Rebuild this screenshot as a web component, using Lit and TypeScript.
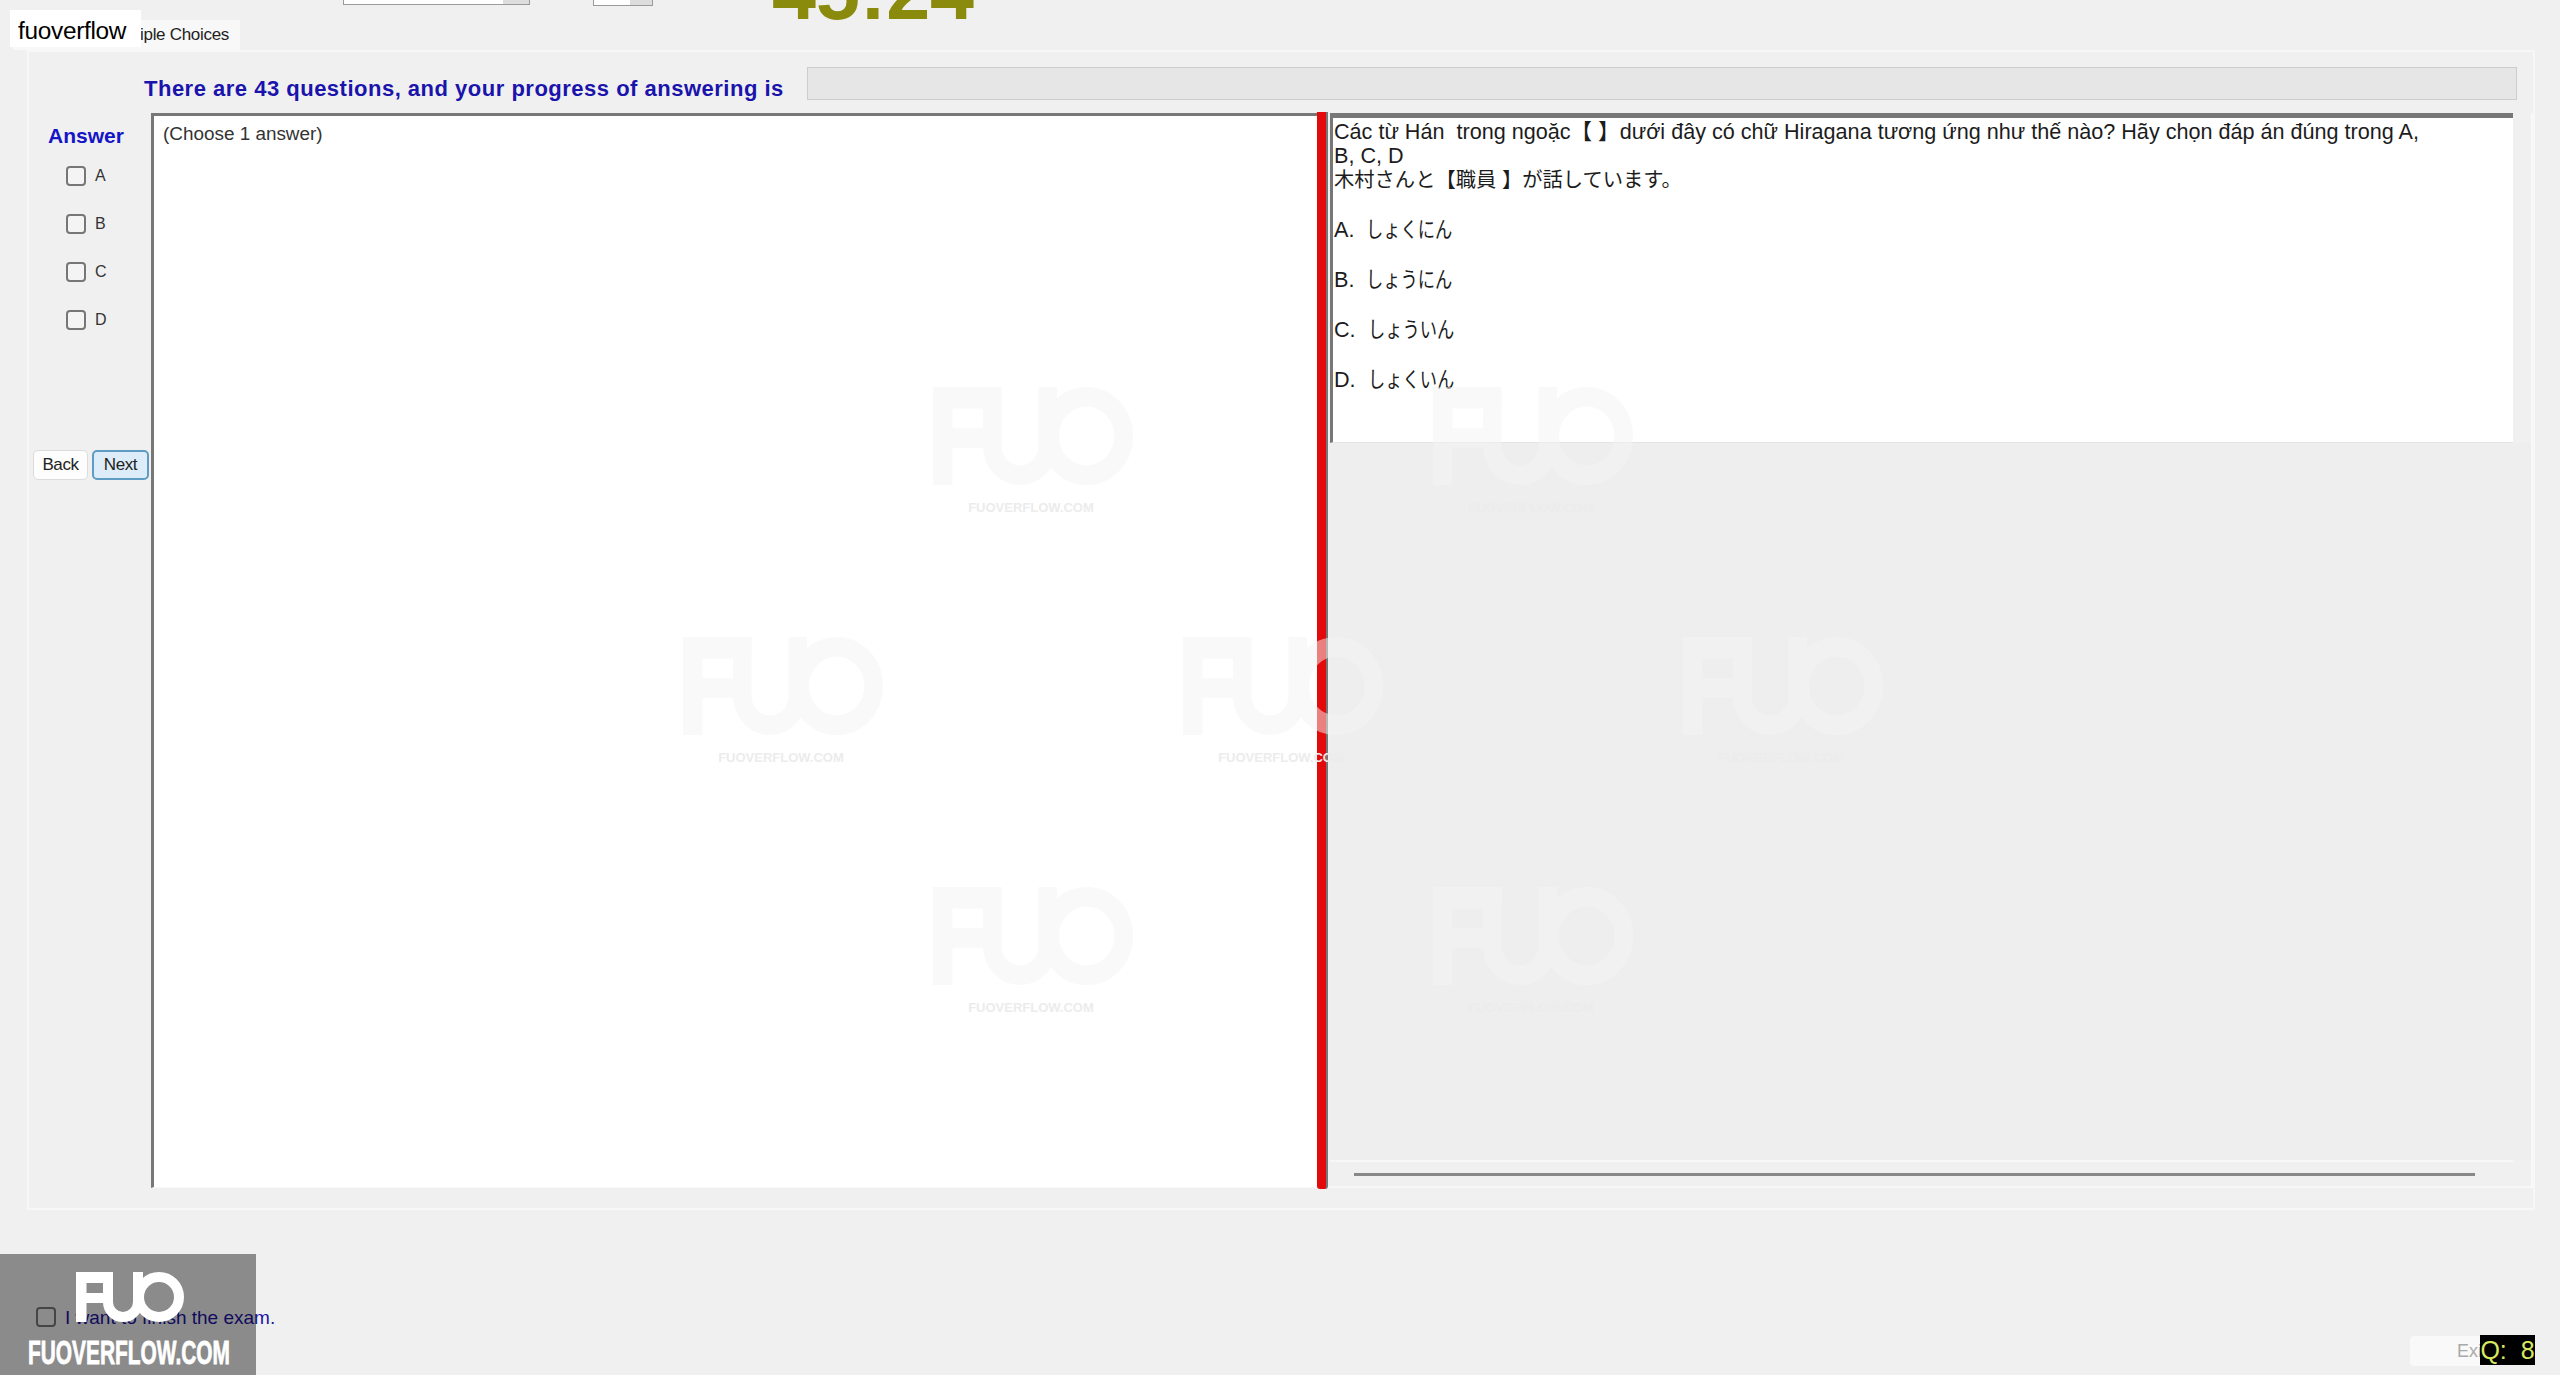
import { LitElement, html, css, svg } from "lit";
import { customElement } from "lit/decorators.js";

const SANS = css`"Liberation Sans", "Noto Sans CJK JP", sans-serif`;

const logoShapes = () => svg`
  <path d="M0 0H37V11H10.5V21H32V31H10.5V50H0Z" />
  <path d="M32 0V30A15 15 0 0 0 62 30V0" fill="none" stroke="currentColor" stroke-width="10" />
  <circle cx="83" cy="25" r="20" fill="none" stroke="currentColor" stroke-width="10" />
`;

const WATERMARKS = [
  [933, 387], [1433, 387],
  [683, 637], [1183, 637], [1683, 637],
  [933, 887], [1433, 887],
];

const OPTIONS = ["A", "B", "C", "D"];
const CHOICES = [
  ["A.", "しょくにん"],
  ["B.", "しょうにん"],
  ["C.", "しょういん"],
  ["D.", "しょくいん"],
];

@customElement("app-root")
export class AppRoot extends LitElement {
  static styles = css`
    :host {
      display: block;
      position: relative;
      width: 2560px;
      height: 1375px;
      overflow: hidden;
      background: #f0f0f0;
      font-family: ${SANS};
      color: #222;
    }
    .top {
      display: flex;
      align-items: flex-start;
      height: 20px;
      padding-left: 343px;
    }
    .combo {
      display: flex;
      justify-content: flex-end;
      width: 187px;
      height: 5px;
      background: #fff;
      border: 1px solid #9a9a9a;
      border-top: 0;
      box-sizing: border-box;
    }
    .combo i {
      display: block;
      width: 26px;
      background: #ddd;
    }
    .spin {
      width: 60px;
      height: 6px;
      margin-left: 63px;
    }
    .spin i {
      width: 22px;
    }
    .timer {
      margin: -43px 0 0 119px;
      font-size: 79px;
      line-height: 70px;
      font-weight: 700;
      color: #8a8a0c;
      white-space: nowrap;
    }
    .tabs {
      display: flex;
      height: 30px;
      padding-left: 13px;
    }
    .tab {
      width: 227px;
      box-sizing: border-box;
      padding-right: 11px;
      background: #f8f8f8;
      font-size: 17px;
      line-height: 30px;
      text-align: right;
      color: #222;
      letter-spacing: -0.3px;
    }
    .panel {
      box-sizing: border-box;
      width: 2508px;
      height: 1160px;
      margin-left: 27px;
      border: 2px solid #f7f7f7;
      display: flex;
      flex-direction: column;
    }
    .progress-row {
      box-sizing: border-box;
      display: flex;
      align-items: flex-start;
      height: 61px;
      padding: 15px 0 0 115px;
    }
    .progress-label {
      box-sizing: border-box;
      width: 663px;
      padding-top: 5px;
      font-size: 22px;
      line-height: 33px;
      letter-spacing: 0.5px;
      font-weight: 700;
      color: #1a14ac;
      white-space: nowrap;
    }
    .progress {
      box-sizing: border-box;
      width: 1710px;
      height: 33px;
      background: #e6e6e6;
      border: 1px solid #cdcdcd;
    }
    .main {
      display: flex;
      height: 1075px;
    }
    .side {
      width: 122px;
      display: flex;
      flex-direction: column;
      align-items: flex-start;
    }
    .answer-title {
      margin: 11px 0 0 19px;
      font-size: 21px;
      line-height: 24px;
      font-weight: 700;
      color: #1414c8;
    }
    .opts {
      display: flex;
      flex-direction: column;
      gap: 28px;
      margin: 18px 0 0 37px;
    }
    .opt {
      display: flex;
      align-items: center;
      gap: 9px;
      height: 20px;
      font-size: 16px;
      color: #333;
    }
    .box {
      display: block;
      box-sizing: border-box;
      width: 20px;
      height: 20px;
      background: #f4f4f4;
      border: 2px solid #777;
      border-radius: 4px;
    }
    .buttons {
      display: flex;
      gap: 4px;
      margin: 120px 0 0 4px;
    }
    .btn {
      box-sizing: border-box;
      width: 55px;
      height: 30px;
      border-radius: 5px;
      border: 1px solid #dcdcdc;
      background: #fdfdfd;
      font-size: 17px;
      line-height: 28px;
      text-align: center;
      color: #222;
      letter-spacing: -0.4px;
    }
    .btn.next {
      width: 57px;
      background: #dcecf8;
      border: 2px solid #5f9cc4;
      line-height: 26px;
    }
    .qbox {
      box-sizing: border-box;
      width: 1166px;
      background: #fff;
      border-left: 3px solid #777;
      border-top: 3px solid #777;
      border-bottom: 1px solid #f8f8f8;
      padding: 6px 0 0 9px;
      font-size: 18.9px;
      line-height: 24px;
      color: #333;
    }
    .splitter {
      box-sizing: border-box;
      width: 11px;
      height: 1077px;
      margin-top: -1px;
      background: #e20a0a;
      border-right: 2px solid #777;
      border-radius: 0 0 3px 3px;
    }
    .right {
      flex: 1;
      display: flex;
      flex-direction: column;
      box-sizing: border-box;
      padding-left: 2px;
      border-right: 2px solid #f8f8f8;
      border-bottom: 2px solid #f8f8f8;
    }
    .content {
      box-sizing: border-box;
      width: 1183px;
      height: 330px;
      background: #fff;
      border-left: 3px solid #777;
      border-top: 5px solid #777;
      border-bottom: 1px solid #e4e4e4;
      padding: 2px 0 0 1px;
      font-size: 21.6px;
      line-height: 24px;
      color: #1c1c1c;
    }
    .qtext {
      width: 1095px;
    }
    .jp {
      font-size: 20.3px;
    }
    .choices {
      margin-top: 26px;
    }
    .choice {
      display: flex;
      gap: 12px;
      height: 24px;
      margin-bottom: 26px;
    }
    .kana {
      display: inline-block;
      transform: scaleX(0.8);
      transform-origin: left center;
    }
    .blank {
      flex: 1;
      background: #eeeeee;
    }
    .track {
      box-sizing: border-box;
      width: 1183px;
      height: 26px;
      border-top: 2px solid #f7f7f7;
      padding: 11px 38px 0 24px;
    }
    .track i {
      display: block;
      height: 3px;
      background: #888;
    }
    .bottom {
      display: flex;
      align-items: flex-start;
      height: 165px;
      padding-left: 36px;
    }
    .finish {
      display: flex;
      align-items: center;
      gap: 9px;
      margin-top: 95px;
      font-size: 19px;
      line-height: 20px;
      color: #1c14a0;
    }
    .finish .box {
      background: transparent;
    }
    .finish span:last-child {
      margin-top: 3px;
    }
    .exit {
      box-sizing: border-box;
      width: 80px;
      height: 30px;
      margin: 126px 70px 0 auto;
      padding-right: 3px;
      background: #f9f9f9;
      border-radius: 4px;
      font-size: 18px;
      line-height: 30px;
      text-align: right;
      color: #aaa;
    }
    .q {
      position: absolute;
      left: 2480px;
      top: 1335px;
      width: 55px;
      height: 30px;
      background: #000;
      color: #d8e860;
      font-size: 25px;
      line-height: 30px;
      white-space: pre;
      text-align: center;
    }
    .brand {
      position: absolute;
      left: 10px;
      top: 10px;
      width: 131px;
      height: 37px;
      box-sizing: border-box;
      padding-left: 8px;
      background: #fff;
      color: #000;
      font-size: 24.4px;
      line-height: 42px;
      letter-spacing: -0.3px;
      white-space: nowrap;
    }
    .wm {
      position: absolute;
      width: 200px;
      pointer-events: none;
    }
    .wm svg {
      display: block;
      width: 200px;
      height: 98px;
      color: #f5f5f5;
      fill: #f5f5f5;
      opacity: 0.5;
    }
    .wm div {
      margin: 16px 0 0 -4px;
      font-size: 13px;
      line-height: 14px;
      font-weight: 700;
      text-align: center;
      color: #ececec;
      white-space: nowrap;
    }
    .badge {
      position: absolute;
      left: 0;
      top: 1254px;
      width: 256px;
      height: 121px;
      background: rgba(0, 0, 0, 0.42);
    }
    .badge .mark {
      position: absolute;
      left: 76px;
      top: 18px;
      width: 108px;
      height: 50px;
      color: #fff;
      fill: #fff;
    }
    .badge .word {
      position: absolute;
      left: 28px;
      top: 84px;
      width: 202px;
      height: 34px;
      fill: #fff;
      stroke: #fff;
      stroke-width: 0.8px;
      font-family: "Liberation Sans", sans-serif;
      font-weight: 700;
      font-size: 33px;
    }
  `;

  render() {
    return html`
      <div class="top">
        <div class="combo"><i></i></div>
        <div class="combo spin"><i></i></div>
        <div class="timer">45:24</div>
      </div>
      <div class="tabs"><div class="tab">Multiple Choices</div></div>
      <div class="panel">
        <div class="progress-row">
          <div class="progress-label">There are 43 questions, and your progress of answering is</div>
          <div class="progress"></div>
        </div>
        <div class="main">
          <div class="side">
            <div class="answer-title">Answer</div>
            <div class="opts">
              ${OPTIONS.map((o) => html`<div class="opt"><span class="box"></span>${o}</div>`)}
            </div>
            <div class="buttons">
              <div class="btn">Back</div>
              <div class="btn next">Next</div>
            </div>
          </div>
          <div class="qbox">(Choose 1 answer)</div>
          <div class="splitter"></div>
          <div class="right">
            <div class="content">
              <div class="qtext">Các từ Hán&nbsp; trong ngoặc【 】dưới đây có chữ Hiragana tương ứng như thế nào? Hãy chọn đáp án đúng trong A, B, C, D</div>
              <div class="jp">木村さんと【職員 】が話しています。</div>
              <div class="choices">
                ${CHOICES.map(([k, v]) => html`<div class="choice"><span>${k}</span><span class="kana">${v}</span></div>`)}
              </div>
            </div>
            <div class="blank"></div>
            <div class="track"><i></i></div>
          </div>
        </div>
      </div>
      <div class="bottom">
        <div class="finish"><span class="box"></span><span>I want to finish the exam.</span></div>
        <div class="exit">Exit</div>
      </div>
      ${WATERMARKS.map(
        ([x, y]) => html`<div class="wm" style="left:${x}px;top:${y}px">
          <svg viewBox="0 0 108 50" preserveAspectRatio="none">${logoShapes()}</svg>
          <div>FUOVERFLOW.COM</div>
        </div>`
      )}
      <div class="brand">fuoverflow</div>
      <div class="q">Q:  8</div>
      <div class="badge">
        <svg class="mark" viewBox="0 0 108 50">${logoShapes()}</svg>
        <svg class="word" viewBox="0 0 202 34">
          <text x="0" y="26" textLength="202" lengthAdjust="spacingAndGlyphs">FUOVERFLOW.COM</text>
        </svg>
      </div>
    `;
  }
}
